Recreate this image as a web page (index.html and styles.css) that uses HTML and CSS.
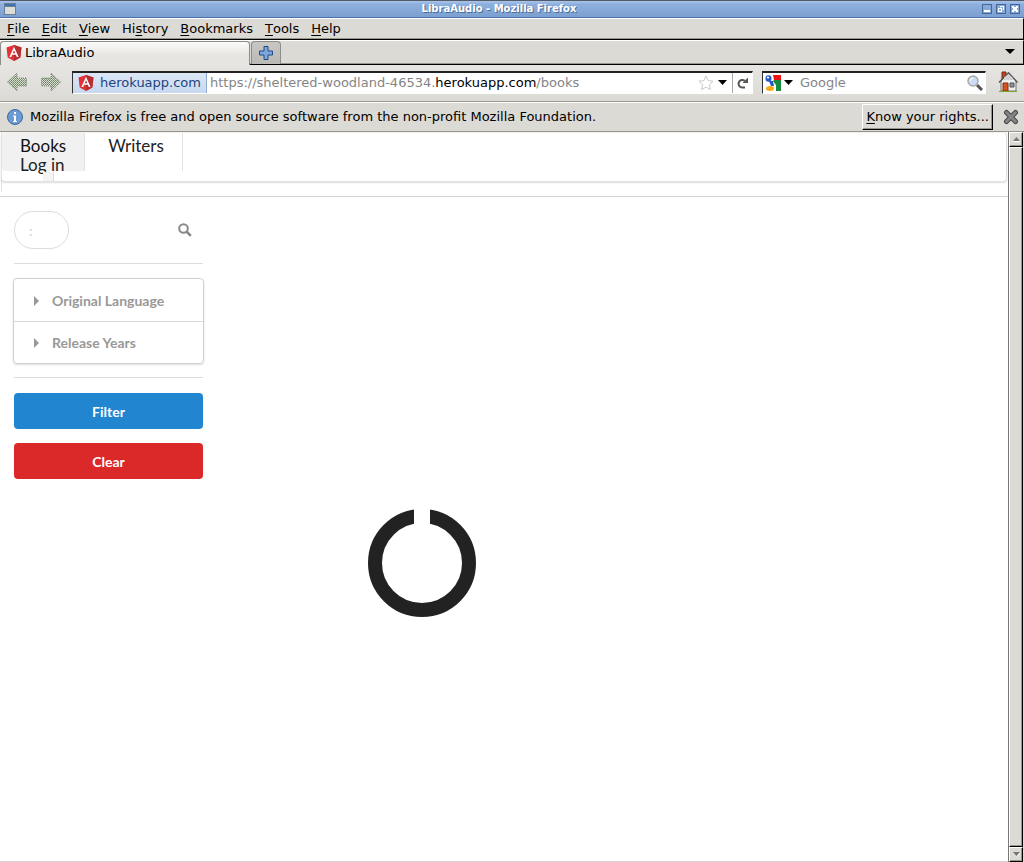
FILE: index.html
```html
<!DOCTYPE html>
<html lang="en">
<head>
<meta charset="utf-8">
<title>LibraAudio</title>
<link rel="stylesheet" href="styles.css">
</head>
<body>
<svg class="defs" width="0" height="0" aria-hidden="true">
  <symbol id="shield" viewBox="0 0 16 16">
    <path d="M8 0 15.500 2.600 14.300 12.500 8 16 1.700 12.500 .5 2.600Z" fill="#e23237"/>
    <path d="M8 0 15.500 2.600 14.300 12.500 8 16Z" fill="#b52e31"/>
    <path d="M8 1.800 3.400 12h1.800l.9-2.300h3.800l.9 2.300h1.800ZM8 5.200l1.300 3.100H6.700Z" fill="#fff" fill-rule="evenodd"/>
  </symbol>
  <pattern id="dither" width="2" height="2" patternUnits="userSpaceOnUse">
    <rect width="2" height="2" fill="#dcdcd6"/><rect width="1" height="1" fill="#668257"/><rect x="1" y="1" width="1" height="1" fill="#7d9470"/>
  </pattern>
</svg>
<div class="window">
  <header class="titlebar">
    <svg class="app-icon" width="12" height="12" viewBox="0 0 12 12"><path d="M0 0h12v12H0z" fill="#6b7f96"/><path d="M1 1h10v2H1z" fill="#3f72ad"/><path d="M1 4h10v7H1z" fill="#dcdcd8"/></svg>
    <span class="window-title">LibraAudio - Mozilla Firefox</span>
    <div class="window-controls">
      <button aria-label="Minimize"><svg width="10" height="10" viewBox="0 0 10 10"><rect x="2" y="6" width="6" height="2" fill="#fff"/></svg></button>
      <button aria-label="Restore"><svg width="10" height="10" viewBox="0 0 10 10" fill="none" stroke="#fff"><path d="M4.500 3.500v-1h3v3h-1"/><rect x="2.500" y="4.500" width="3" height="3"/></svg></button>
      <button aria-label="Close"><svg width="10" height="10" viewBox="0 0 10 10"><path d="M2 2h2v1h2V2h2v2H7v2h1v2H6V7H4v1H2V6h1V4H2Z" fill="#fff"/></svg></button>
    </div>
  </header>
  <nav class="menubar" aria-label="Application menu">
    <button><u>F</u>ile</button><button><u>E</u>dit</button><button><u>V</u>iew</button><button>Hi<u>s</u>tory</button><button><u>B</u>ookmarks</button><button><u>T</u>ools</button><button><u>H</u>elp</button>
  </nav>
  <div class="tabs">
    <button class="tab"><svg width="16" height="16"><use href="#shield"/></svg><span>LibraAudio</span></button>
    <button class="new-tab" aria-label="New tab"><svg width="14" height="14" viewBox="0 0 14 14"><path d="M5 .5h4V5h4.500v4H9v4.500H5V9H.5V5H5Z" fill="#7ba7dc" stroke="#1f4a87"/></svg></button>
    <button class="all-tabs" aria-label="List all tabs"><svg width="10" height="6"><path d="M0 0h10L5 5Z"/></svg></button>
  </div>
  <div class="toolbar">
    <button class="nav-arrow" aria-label="Back"><svg width="20" height="20" viewBox="0 0 20 20"><path d="M.5 10 10 1v5h9.500v8H10v5Z" fill="url(#dither)" stroke="#858a80" stroke-dasharray="1 1"/></svg></button>
    <button class="nav-arrow" aria-label="Forward"><svg width="20" height="20" viewBox="0 0 20 20"><path d="M19.500 10 10 1v5H.5v8H10v5Z" fill="url(#dither)" stroke="#858a80" stroke-dasharray="1 1"/></svg></button>
    <div class="address">
      <button class="identity"><svg width="16" height="16"><use href="#shield"/></svg><span>herokuapp.com</span></button>
      <div class="url" role="textbox" aria-label="Address" contenteditable="true" spellcheck="false">https://sheltered-woodland-46534.<b>herokuapp.com</b>/books</div>
      <button class="star" aria-label="Bookmark this page"><svg width="16" height="16" viewBox="0 0 16 16"><path d="m8 1 2.100 4.600 5 .6-3.700 3.400 1 5L8 12.100l-4.400 2.500 1-5L.9 6.200l5-.6Z" fill="#fff" stroke="#c9c9c9"/></svg></button>
      <button class="history-drop" aria-label="Show history"><svg width="9" height="5"><path d="M0 0h9L4.500 5Z"/></svg></button>
      <button class="reload" aria-label="Reload"><svg width="12" height="12" viewBox="0 0 12 12"><path d="M8 10.500H5A3.800 3.800 0 1 1 7.800 3.800" fill="none" stroke="#555" stroke-width="2"/><path d="M11 .5V6H5.500Z" fill="#555"/></svg></button>
    </div>
    <div class="search">
      <button class="engine" aria-label="Search engine"><svg width="16" height="16" viewBox="0 0 16 16"><path d="M0 0h16v16H0z" fill="#fff"/><path d="M8 0h8v5H9Z" fill="#e11"/><path d="M9 5h7v11h-5V10L8 6Z" fill="#168b3c"/><ellipse cx="3.500" cy="3.500" rx="3" ry="3.200" fill="#2459c3"/><ellipse cx="3" cy="2.500" rx="1.200" ry="1" fill="#fff"/><path d="M4 6h4l1 5H6Z" fill="#2459c3"/><ellipse cx="5" cy="13.500" rx="4" ry="2.500" fill="#f6a915"/></svg><svg width="9" height="5"><path d="M0 0h9L4.500 5Z"/></svg></button>
      <input type="search" placeholder="Google" aria-label="Search with Google">
      <button class="go" aria-label="Search"><svg width="16" height="16" viewBox="0 0 16 16"><path d="m10 10 5 5" stroke="#555" stroke-width="3"/><circle cx="6" cy="6" r="5" fill="#c9def2" stroke="#aaa" stroke-width="1.500"/><path d="M3 6a3 3 0 0 1 3-3" stroke="#fff" fill="none"/></svg></button>
    </div>
    <button class="home" aria-label="Home"><svg width="20" height="22" viewBox="0 0 20 22"><path d="M4 1h4v7H4z" fill="#c8401c" stroke="#7a2a14"/><path d="M3 10 10.500 2 18 10v10H3Z" fill="#eee" stroke="#777"/><path d="M1 11.500 10.500 1.800 19.500 11.500" fill="none" stroke="#555" stroke-width="1.500"/><path d="M6 6.500 10.500 3 15 7v2H6Z" fill="#d2d2d2"/><path d="M5 12h5v8H5z" fill="#d75322" stroke="#82300f"/><path d="M12 12h4v4h-4z" fill="#8797a5" stroke="#555"/><path d="M1 20.500h18" stroke="#78a832"/></svg></button>
  </div>
  <div class="notice">
    <svg width="16" height="16" viewBox="0 0 16 16"><circle cx="8" cy="8" r="7.500" fill="#6b9bd3" stroke="#40699c"/><path d="M7 3h2v2H7zM6 6.500h3V12h1v1H6v-1h1V7.500H6Z" fill="#fff"/></svg>
    <span class="notice-text">Mozilla Firefox is free and open source software from the non-profit Mozilla Foundation.</span>
    <button class="rights"><u>K</u>now your rights...</button>
    <button class="dismiss" aria-label="Close notification"><svg width="16" height="16" viewBox="0 0 16 16"><path d="m3.500 3.500 9 9M12.500 3.500l-9 9" stroke="#464646" stroke-width="5" stroke-linecap="round"/><path d="m3.500 3.500 9 9M12.500 3.500l-9 9" stroke="#858585" stroke-width="3" stroke-linecap="round"/></svg></button>
  </div>
  <div class="viewport">
    <div class="page">
      <div class="site-header">
        <nav class="site-nav">
          <a class="item active" href="#books">Books</a><a class="item" href="#writers">Writers</a>
          <a class="login" href="#login">Log in</a>
        </nav>
      </div>
      <div class="columns">
        <aside class="sidebar">
          <div class="finder"><input type="text" aria-label="Search books" placeholder=":"><button aria-label="Search books"><svg width="14" height="14" viewBox="0 0 14 14" fill="none" stroke="#888" stroke-width="2"><circle cx="5.500" cy="5.500" r="4.300"/><path d="m8.500 8.500 4.300 4.300" stroke-width="2.500"/></svg></button></div>
          <div class="accordion">
            <button><svg width="5" height="10"><path d="M0 0v10l5-5Z" fill="#999"/></svg>Original Language</button>
            <button><svg width="5" height="10"><path d="M0 0v10l5-5Z" fill="#999"/></svg>Release Years</button>
          </div>
          <div class="actions">
            <button class="filter">Filter</button>
            <button class="clear">Clear</button>
          </div>
        </aside>
        <main class="results">
          <svg role="img" aria-label="Loading" width="108" height="108" viewBox="0 0 108 108"><circle cx="54" cy="54" r="47" fill="none" stroke="#222" stroke-width="14"/><path d="M46 0h16v20H46Z" fill="#fff"/></svg>
        </main>
      </div>
    </div>
    <div class="scrollbar">
      <button aria-label="Scroll up"><svg width="7" height="5"><path d="M0 4h7L3.500 0Z" fill="#777"/><path d="M0 4.500h7" stroke="#fff"/></svg></button>
      <div class="thumb"></div>
      <button aria-label="Scroll down"><svg width="7" height="5"><path d="M0 0h7L3.500 4Z" fill="#777"/><path d="M4 4.500 7 1" stroke="#fff"/></svg></button>
    </div>
  </div>
</div>
</body>
</html>
```
FILE: styles.css
```css
* { box-sizing: border-box; }
body { margin: 0; background: #fff; color: #000; font: 13px/16px "DejaVu Sans", sans-serif; }
button, input { font: inherit; color: inherit; margin: 0; padding: 0; border: 0; background: none; border-radius: 0; outline: 0; }
button { display: flex; align-items: center; }
svg { display: block; flex: none; }
a { color: inherit; text-decoration: none; }
.defs { position: absolute; }
.window { min-height: 100vh; display: flex; flex-direction: column; }

.titlebar { height: 18px; flex: none; display: flex; align-items: center; padding: 0 4px; border-top: 1px solid #555b66; border-bottom: 1px solid #4a72aa; background: linear-gradient(#a8c4ea, #8fb0de 20%, #7a9fd0); }
.window-title { flex: 1; text-align: center; color: #fff; font-size: 10px; font-weight: bold; line-height: 16px; text-shadow: 1px 1px 0 #4c6c97; }
.window-controls { display: flex; gap: 4px; }
.window-controls button { width: 10px; height: 10px; border: 1px solid #426698; background: #86a9d8; justify-content: center; }

.menubar { height: 22px; flex: none; display: flex; align-items: center; gap: 12px; padding: 0 7px; background: #dcdad5; border-top: 1px solid #fff; border-bottom: 1px solid #000; border-right: 1px solid #000; box-shadow: inset 0 -1px #99968c; }
.menubar u, .rights u { text-underline-offset: 2px; text-decoration-thickness: 1px; }

.tabs { height: 25px; flex: none; display: flex; background: #dcdad5; border-top: 1px solid #fff; border-bottom: 1px solid #000; border-right: 1px solid #000; box-shadow: inset 0 -1px #99968c; }
.tab { width: 250px; height: 24px; gap: 3px; padding: 0 5px 1px; border: 1px solid #8c8c8a; border-bottom: 0; border-radius: 4px 4px 0 0; background: linear-gradient(#fbfbfa, #e6e5e1 60%); }
.new-tab { width: 30px; margin-left: 1px; justify-content: center; border: 1px solid #8c8c8a; border-bottom: 0; border-radius: 4px 4px 0 0; background: linear-gradient(#c9c7c4, #bbb9b5); }
.all-tabs { margin-left: auto; padding: 0 8px 2px 0; }

.toolbar { height: 37px; flex: none; display: flex; align-items: center; padding: 0 6px 2px 7px; background: linear-gradient(#e6e5e2, #dcdad5); border-bottom: 1px solid #99968c; }
.nav-arrow { margin-right: 14px; }
.address, .search { display: flex; height: 23px; background: #fff; border: 1px solid #99968c; border-top: 2px solid #222; border-left-color: #333; border-right-color: #fff; border-bottom-color: #fff; }
.address { flex: 1; min-width: 0; margin-left: -3px; }
.identity { gap: 6px; padding: 0 5px 0 5px; color: #1e4480; background: linear-gradient(#dce7f6, #c7d9ef); border-right: 1px solid #8daacf; }
.url { flex: 1; min-width: 0; padding-left: 3px; line-height: 20px; white-space: nowrap; overflow: hidden; color: #858585; outline: 0; }
.url b { font-weight: normal; color: #000; }
.star { margin-right: 4px; }
.history-drop { margin-right: 5px; }
.reload { width: 20px; justify-content: center; border-left: 1px solid #aaa; }
.search { width: 224px; margin: 0 12px 0 9px; }
.engine { gap: 3px; padding-left: 2px; }
.search input { flex: 1; min-width: 0; padding-left: 7px; }
.search input::placeholder { color: #858585; opacity: 1; }
.go { padding-right: 2px; }

.notice { height: 30px; flex: none; display: flex; align-items: center; padding: 0 5px 0 7px; background: #dcdad5; border-top: 1px solid #fff; border-bottom: 1px solid #99968c; }
.notice-text { flex: 1; padding-left: 7px; }
.rights { height: 26px; padding: 0 3px; margin-right: 10px; border: 1px solid #000; border-top-color: #fff; border-left-color: #fff; box-shadow: inset -1px -1px #99968c; }

.viewport { flex: 1; display: flex; }
.page { flex: 1; min-width: 0; background: #fff; border-bottom: 1px solid #d4d4d4; font-family: Lato, sans-serif; }
.site-header { height: 65px; border-bottom: 1px solid #d4d4d4; padding: 0 1px; background: linear-gradient(#e2e2e2, #e2e2e2) 1px 0 / 1px 60px no-repeat; }
.site-nav { position: relative; display: flex; height: 50px; border: 1px solid #e2e2e2; border-top-color: #f1f1f1; border-radius: 4px; background: #fff; box-shadow: 0 1px 2px rgba(34,36,38,.15); font-size: 17px; line-height: 20px; color: #222; }
.item { height: 38px; padding: 3px 18px 0; border-right: 1px solid #e2e2e2; }
.item + .item { padding-left: 23px; }
.active { background: #f1f1f1; color: #111; border-radius: 4px 0 0 4px; }
.login { position: absolute; left: 18px; top: 22px; }
.login::after { content: ""; position: absolute; left: 23px; top: 17px; width: 10px; height: 9px; background: #f4f4f4; border-right: 1px solid #ddd; }
.columns { display: flex; }
.sidebar { width: 204px; padding: 14px 1px 0 14px; }
.finder { display: flex; align-items: center; justify-content: space-between; padding: 0 11px 14px 0; border-bottom: 1px solid #ddd; }
.finder input { width: 55px; height: 38px; padding: 0 14px; border: 1px solid #ddd; border-radius: 19px; font-size: 14px; }
.finder input::placeholder { color: #ccc; }
.accordion { margin: 14px -1px 13px; border: 1px solid #d0d0d0; border-radius: 4px; box-shadow: 0 1px 2px rgba(34,36,38,.15); }
.accordion button { width: 100%; height: 42px; gap: 13px; padding: 1px 20px 0; color: #999; font-size: 14px; font-weight: bold; }
.accordion button + button { border-top: 1px solid #d8d8d8; }
.actions { display: grid; gap: 14px; padding-top: 15px; border-top: 1px solid #ddd; }
.actions button { height: 36px; padding-top: 2px; justify-content: center; border-radius: 4px; color: #fff; font-size: 14px; font-weight: bold; }
.filter { background: #2185d0; }
.clear { background: #db2828; }
.results { flex: 1; padding: 312px 0 0 164px; }

.scrollbar { width: 16px; flex: none; display: flex; flex-direction: column; background: #dcdad5; border-left: 1px solid #777; }
.scrollbar button, .thumb { width: 14px; border: 1px solid #000; border-top-color: #fff; border-left-color: #fff; box-shadow: inset -1px -1px #99968c; }
.scrollbar button { height: 15px; justify-content: center; }
.thumb { flex: 1; }
```
